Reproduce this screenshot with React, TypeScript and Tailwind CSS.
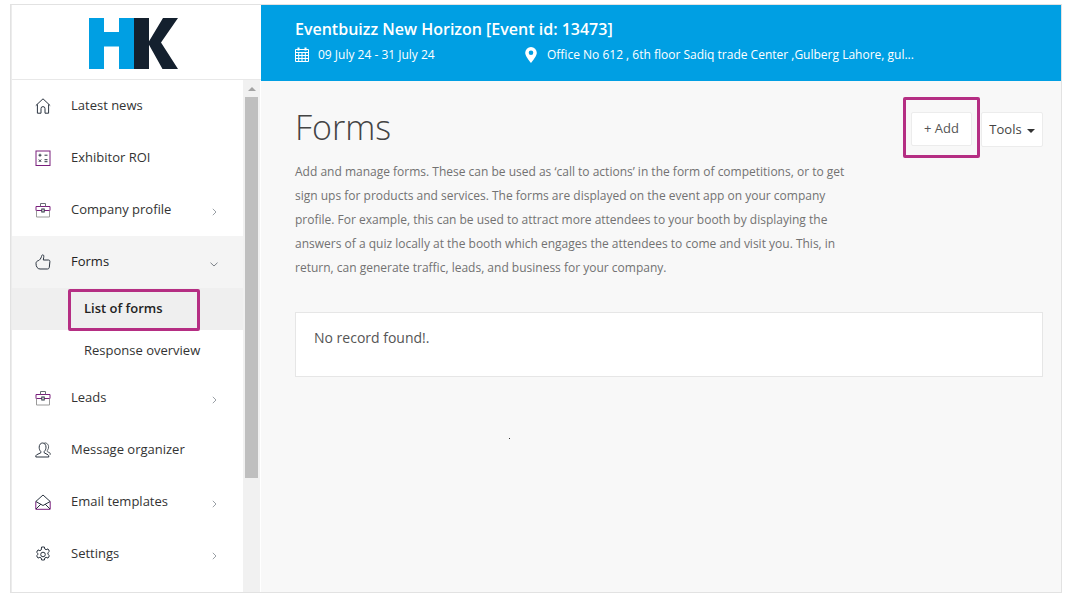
import React from "react";

const stroke = "#2b3440";
const purple = "#7a1f7d";

const Home = () => (
  <svg width="16" height="16" viewBox="0 0 16 16" fill="none" stroke={stroke} strokeWidth="1">
    <path d="M.8 7.600 8 .8l7.200 6.800M2.400 6.400v8.800h3.600v-4.600a2 2 0 0 1 4 0v4.600h3.600V6.400" />
  </svg>
);
const Calc = () => (
  <svg width="16" height="16" viewBox="0 0 16 16" fill="none" stroke={stroke} strokeWidth="1">
    <rect x="1" y="1" width="14" height="14.500" stroke={purple} />
    <path d="M3.500 5.200h3M5 3.700v3M9.500 5.200h3M3.800 9.500l2.400 2.400M6.200 9.500l-2.400 2.400M9.500 9.700h3M9.500 11.700h3" />
  </svg>
);
const Case = () => (
  <svg width="16" height="16" viewBox="0 0 16 16" fill="none" strokeWidth="1">
    <path d="M1 8.500V4.500h14v4" stroke={purple} />
    <path d="M1 8.500h14" stroke={purple} />
    <path d="M1.500 8.500v6.500h13V8.500" stroke="#9a9a9a" />
    <path d="M5.500 4.500V1.500h5v3" stroke="#6a6f76" />
    <rect x="6.800" y="7" width="2.400" height="3" stroke={stroke} fill="#fff" />
  </svg>
);
const Thumb = () => (
  <svg width="16" height="16" viewBox="0 0 16 16" fill="none" stroke={stroke} strokeWidth="1">
    <path d="M1 9.500c0-1.600 1-2.500 2.200-2.800 1.500-.4 2.700-2.200 3.300-4.200.3-1 .6-1.700 1.200-1.700.9 0 1.300 1 1 2.500L8.300 6h5.200c1 0 1.500.7 1.400 1.700l-.6 5.600c-.1 1-.8 1.700-1.800 1.700H5c-2.500 0-4-2.300-4-5.500z" />
  </svg>
);
const People = () => (
  <svg width="16" height="16" viewBox="0 0 16 16" fill="none" stroke={stroke} strokeWidth="1">
    <path d="M4.200 5.200C4.200 2.700 5.600 1 7.600 1s3.400 1.700 3.400 4.200c0 1.900-.8 3.500-1.800 4.300v1.300l3.800 2c.6.300.8 1 .8 2.200H.8c0-1.200.2-1.900.8-2.200l4.200-2V9.500c-1-.8-1.600-2.400-1.600-4.300z" />
    <path d="M9.500 .8c2.300 0 4.100 1.600 4.100 4 0 1.500-.5 2.800-1.300 3.600v1.200l2.900 1.500v1.800" stroke="#5e646b" />
  </svg>
);
const Mail = () => (
  <svg width="16" height="16" viewBox="0 0 16 16" fill="none" strokeWidth="1">
    <path d="M.8 7.500 8 1l7.200 6.500" stroke={stroke} />
    <path d="M.8 7.500v7.800h14.400V7.500" stroke={purple} />
    <path d="M.8 7.500 8 11.500l7.200-4M1 15l5-5M15 15l-5-5" stroke={stroke} />
  </svg>
);
const Gear = () => (
  <svg width="16" height="16" viewBox="0 0 16 16" fill="none" stroke={stroke} strokeWidth="1">
    <path d="M6.600 1h2.800l.4 2 1.300.7 1.900-.8 1.400 2.400-1.500 1.400v1.600l1.500 1.400-1.400 2.400-1.900-.8-1.300.7-.4 2H6.600l-.4-2-1.300-.7-1.900.8-1.400-2.400 1.500-1.400V7.700L1.600 6.300 3 3.900l1.900.8 1.300-.7z" />
    <circle cx="8" cy="8.500" r="2.300" />
  </svg>
);
const ChevronRight = () => (
  <svg width="5" height="8" viewBox="0 0 5 8" fill="none" stroke="#9aa0a6" strokeWidth="1"><path d="m.8.800 3.200 3.200L.8 7.200" /></svg>
);
const ChevronDown = () => (
  <svg width="8" height="5" viewBox="0 0 8 5" fill="none" stroke="#7b8087" strokeWidth="1"><path d="M.5.700 4 4 7.500.700" /></svg>
);
const CalendarIcon = () => (
  <svg width="14" height="15" viewBox="0 0 14 15" fill="none" stroke="#fff" strokeWidth="1">
    <path d="M.5 2.500h13v12H.5z" />
    <path d="M.5 5.500h13M.5 8.500h13M.5 11.500h13M3.700 5.500v9M7 5.500v9M10.300 5.500v9" />
    <path d="M3.500.5v3M10.500.5v3" strokeWidth="2" />
  </svg>
);
const PinIcon = () => (
  <svg width="12" height="16" viewBox="0 0 12 16">
    <path fillRule="evenodd" fill="#fff" d="M6 0a5.800 5.800 0 0 1 5.800 5.800C11.800 9 8 13.500 6 16 4 13.500.2 9 .2 5.800A5.800 5.800 0 0 1 6 0zm0 3.500a2.300 2.300 0 1 0 0 4.600 2.300 2.300 0 0 0 0-4.600z" />
  </svg>
);

function Row({ icon, label, chevron }: { icon: React.ReactNode; label: string; chevron?: "right" | "down" }) {
  return (
    <div className={`flex items-center h-[52px] pl-[23px] pr-[25px] ${chevron === "down" ? "bg-[#f4f4f4] text-[#222]" : "text-[#333]"}`}>
      <div className="w-[16px] h-[16px] flex shrink-0">{icon}</div>
      <span className={`ml-[20px] flex-1 text-[13px] ${chevron === "down" ? "font-medium" : ""}`}>{label}</span>
      {chevron === "right" && <span className="mt-[4px] mr-[1px] flex"><ChevronRight /></span>}
      {chevron === "down" && <span className="mt-[4px] flex"><ChevronDown /></span>}
    </div>
  );
}

export default function App() {
  return (
    <div className="h-[602px] w-[1074px] bg-white pl-[10px] pt-[4px] overflow-hidden" style={{ fontFamily: '"Open Sans", sans-serif' }}>
      <div className="relative w-[1052px] h-[589px] border border-[#e2e2e2] bg-[#f8f8f8] flex">
        <aside className="w-[250px] shrink-0 flex flex-col bg-white border-l border-l-[#ececec]">
          <div className="h-[75px] shrink-0 flex items-center justify-center border-b border-[#e8e8e8] pr-[5px] pt-[3px]">
            <svg width="90" height="51" viewBox="0 0 90 51">
              <path fill="#009fe3" d="M0 0h15v51H0zM15 14h15v14.500H15zM30 0h15v51H30z" />
              <path fill="#14202e" d="M45 0h15v51H45z" />
              <path fill="#14202e" d="M59 25 74 0h15L72 24.500 89 51H73.500z" />
            </svg>
          </div>
          <div className="flex flex-1 min-h-0 overflow-hidden">
            <nav className="w-[231px] shrink-0">
              <Row icon={<Home />} label="Latest news" />
              <Row icon={<Calc />} label="Exhibitor ROI" />
              <Row icon={<Case />} label="Company profile" chevron="right" />
              <Row icon={<Thumb />} label="Forms" chevron="down" />
              <div className="h-[42px] bg-[#efefef] flex items-center pl-[72px] text-[13px] font-semibold text-[#222]">List of forms</div>
              <div className="h-[42px] flex items-center pl-[72px] text-[13px] text-[#333]">Response overview</div>
              <Row icon={<Case />} label="Leads" chevron="right" />
              <Row icon={<People />} label="Message organizer" />
              <Row icon={<Mail />} label="Email templates" chevron="right" />
              <Row icon={<Gear />} label="Settings" chevron="right" />
            </nav>
            <div className="w-[17px] shrink-0 bg-[#f1f1f1] flex flex-col items-center">
              <div className="h-[17px] shrink-0 flex items-center justify-center">
                <div className="w-0 h-0 border-x-[4px] border-x-transparent border-b-[4px] border-b-[#a3a3a3]" />
              </div>
              <div className="w-[13px] h-[381px] bg-[#bfbfbf]" />
            </div>
          </div>
        </aside>
        <div className="flex-1 min-w-0 flex flex-col">
          <header className="h-[76px] shrink-0 bg-[#009fe3] text-white pl-[34px] pt-[13px]">
            <div className="text-[16px] leading-[22px] font-semibold">Eventbuizz New Horizon [Event id: 13473]</div>
            <div className="flex items-center mt-[4px] h-[22px] text-[12px]">
              <span className="flex mb-[1px]"><CalendarIcon /></span>
              <span className="ml-[9px] w-[207px]">09 July 24 - 31 July 24</span>
              <span className="flex mb-[1px]"><PinIcon /></span>
              <span className="ml-[10px]">Office No 612 , 6th floor Sadiq trade Center ,Gulberg Lahore, gul...</span>
            </div>
          </header>
          <main className="flex-1 pl-[34px] pr-[18px] pt-[21px]">
            <div className="flex justify-between items-start h-[210px]">
              <div className="w-[556px]">
                <h1 className="text-[34px] leading-[50px] font-light text-[#444]">Forms</h1>
                <p className="mt-[8px] text-[12px] leading-[24px] text-[#727272]">
                  Add and manage forms. These can be used as ‘call to actions’ in the form of competitions, or to get sign ups for products and services. The forms are displayed on the event app on your company profile. For example, this can be used to attract more attendees to your booth by displaying the answers of a quiz locally at the booth which engages the attendees to come and visit you. This, in return, can generate traffic, leads, and business for your company.
                </p>
              </div>
              <div className="flex gap-[9px] mt-[10px]">
                <button className="w-[61px] h-[34px] bg-white border border-[#ececec] rounded-[2px] text-[13px] text-[#555] flex items-center justify-center">+ Add</button>
                <button className="w-[62px] h-[35px] bg-white border border-[#ececec] rounded-[2px] text-[13px] text-[#444] flex items-center justify-center gap-[5px]">
                  Tools
                  <span className="w-0 h-0 mt-[2px] border-x-[4px] border-x-transparent border-t-[4px] border-t-[#333]" />
                </button>
              </div>
            </div>
            <div className="h-[65px] bg-white border border-[#e6e6e6] pl-[18px] pt-[15px] text-[14px] leading-[20px] text-[#555]">No record found!.</div>
          </main>
        </div>
        <div className="absolute left-[57px] top-[284px] w-[132px] h-[42px] border-[3px] border-[#b52e83] rounded-[2px]" />
        <div className="absolute left-[892px] top-[92px] w-[77px] h-[61px] border-[3px] border-[#b52e83] rounded-[2px]" />
        <div className="absolute left-[498px] top-[433px] w-px h-px bg-[#333]" />
      </div>
    </div>
  );
}
